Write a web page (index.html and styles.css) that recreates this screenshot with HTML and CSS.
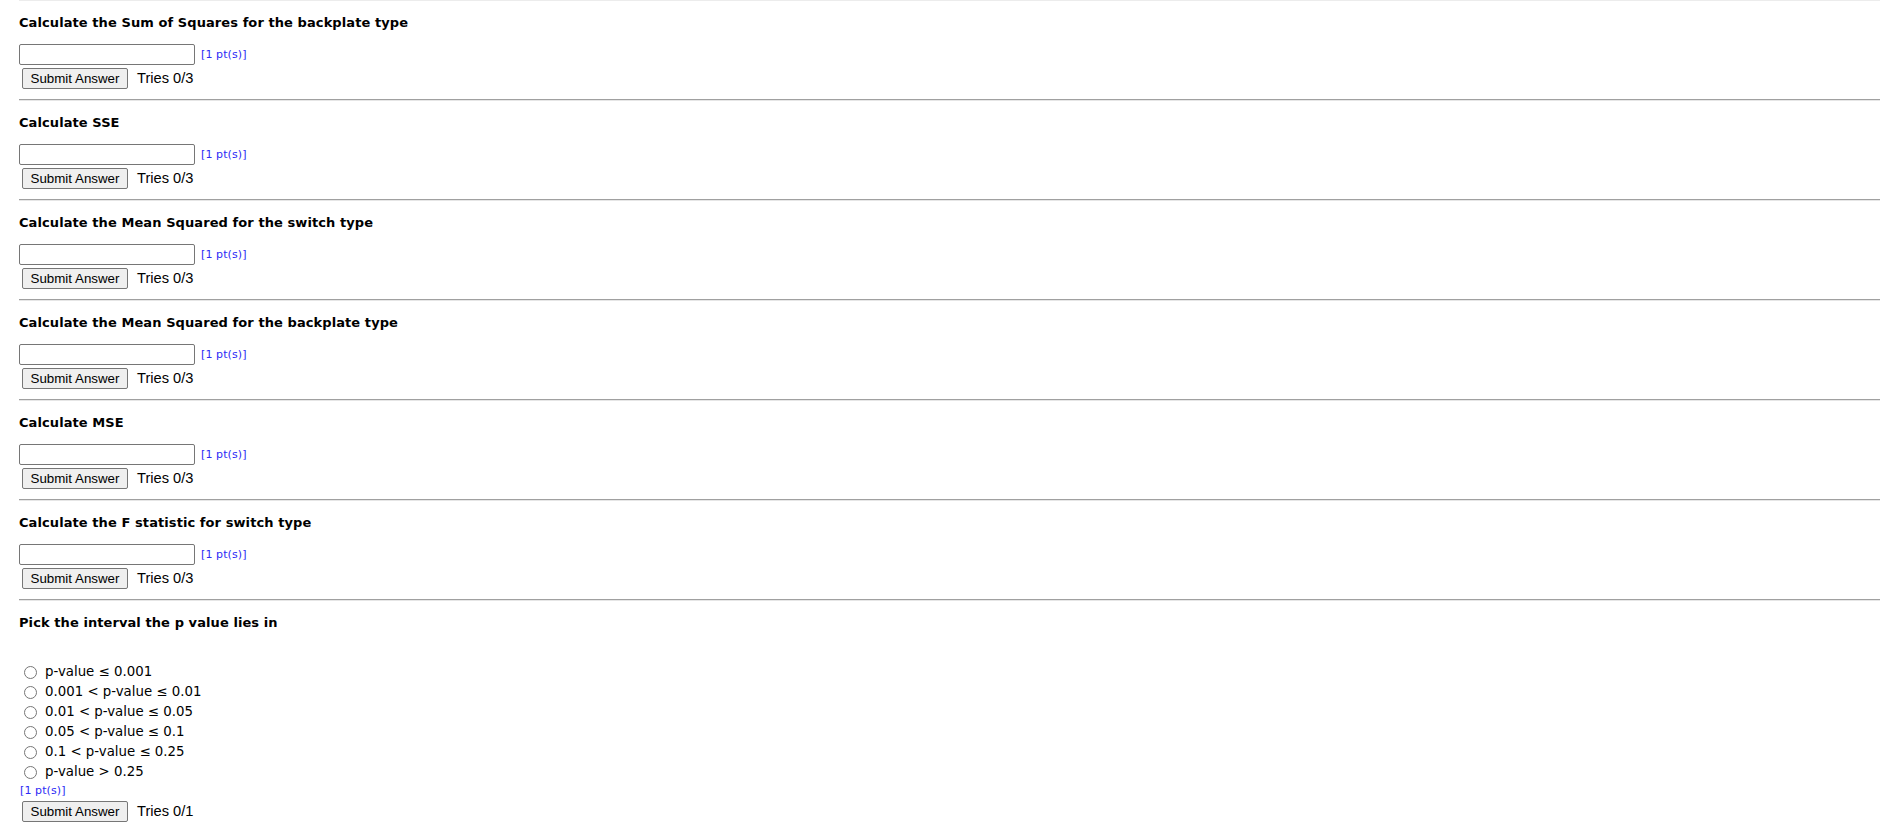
FILE: index.html
```html
<!DOCTYPE html>
<html>
<head>
<meta charset="utf-8">
<title>Problems</title>
<link rel="stylesheet" href="styles.css">
</head>
<body>
<div class="page">
  <div class="top-rule"></div>

  <div class="q">
    <h3 class="qt">Calculate the Sum of Squares for the backplate type</h3>
    <div class="ans"><input class="box" type="text"><span class="pts">[1 pt(s)]</span></div>
    <div class="sub"><button class="btn" type="button">Submit Answer</button><span class="tries">Tries 0/3</span></div>
  </div>
  <hr class="rule">

  <div class="q">
    <h3 class="qt">Calculate SSE</h3>
    <div class="ans"><input class="box" type="text"><span class="pts">[1 pt(s)]</span></div>
    <div class="sub"><button class="btn" type="button">Submit Answer</button><span class="tries">Tries 0/3</span></div>
  </div>
  <hr class="rule">

  <div class="q">
    <h3 class="qt">Calculate the Mean Squared for the switch type</h3>
    <div class="ans"><input class="box" type="text"><span class="pts">[1 pt(s)]</span></div>
    <div class="sub"><button class="btn" type="button">Submit Answer</button><span class="tries">Tries 0/3</span></div>
  </div>
  <hr class="rule">

  <div class="q">
    <h3 class="qt">Calculate the Mean Squared for the backplate type</h3>
    <div class="ans"><input class="box" type="text"><span class="pts">[1 pt(s)]</span></div>
    <div class="sub"><button class="btn" type="button">Submit Answer</button><span class="tries">Tries 0/3</span></div>
  </div>
  <hr class="rule">

  <div class="q">
    <h3 class="qt">Calculate MSE</h3>
    <div class="ans"><input class="box" type="text"><span class="pts">[1 pt(s)]</span></div>
    <div class="sub"><button class="btn" type="button">Submit Answer</button><span class="tries">Tries 0/3</span></div>
  </div>
  <hr class="rule">

  <div class="q">
    <h3 class="qt">Calculate the F statistic for switch type</h3>
    <div class="ans"><input class="box" type="text"><span class="pts">[1 pt(s)]</span></div>
    <div class="sub"><button class="btn" type="button">Submit Answer</button><span class="tries">Tries 0/3</span></div>
  </div>
  <hr class="rule">

  <div class="q">
    <h3 class="qt">Pick the interval the p value lies in</h3>
    <div class="opts">
      <label class="opt"><input class="radio" type="radio" name="pv"><span class="opt-text">p-value ≤ 0.001</span></label>
      <label class="opt"><input class="radio" type="radio" name="pv"><span class="opt-text">0.001 &lt; p-value ≤ 0.01</span></label>
      <label class="opt"><input class="radio" type="radio" name="pv"><span class="opt-text">0.01 &lt; p-value ≤ 0.05</span></label>
      <label class="opt"><input class="radio" type="radio" name="pv"><span class="opt-text">0.05 &lt; p-value ≤ 0.1</span></label>
      <label class="opt"><input class="radio" type="radio" name="pv"><span class="opt-text">0.1 &lt; p-value ≤ 0.25</span></label>
      <label class="opt"><input class="radio" type="radio" name="pv"><span class="opt-text">p-value &gt; 0.25</span></label>
    </div>
    <div class="pts pts-block">[1 pt(s)]</div>
    <div class="sub sub-radio"><button class="btn" type="button">Submit Answer</button><span class="tries">Tries 0/1</span></div>
  </div>
</div>
</body>
</html>
```

FILE: styles.css
```css
html, body {
  margin: 0;
  padding: 0;
  background: #ffffff;
}

.page {
  padding: 0 7px 0 19px;
  font-family: "DejaVu Sans", Verdana, sans-serif;
  color: #000;
}

.top-rule {
  height: 1px;
  background: #ececec;
}

.rule {
  margin: 0;
  border: none;
  height: 2px;
  box-sizing: border-box;
  border-top: 1px solid #a0a0a0;
  border-bottom: 1px solid #e6e6e6;
}

.q {
  padding-bottom: 10px;
}

.qt {
  margin: 13px 0 0 0;
  font-size: 13px;
  line-height: 17px;
  font-weight: bold;
  letter-spacing: 0.08px;
  font-family: "DejaVu Sans", Verdana, sans-serif;
}

.ans {
  margin-top: 13px;
  display: flex;
  align-items: center;
  gap: 6px;
}

.box {
  width: 176px;
  height: 21px;
  box-sizing: border-box;
  margin: 0;
  padding: 1px 2px;
  border: 1px solid #767676;
  border-radius: 2px;
  background: #fff;
  font-family: "Liberation Sans", Arial, sans-serif;
  font-size: 13.33px;
}

.pts {
  font-size: 11px;
  line-height: 15px;
  letter-spacing: 0.1px;
  color: #2b2bf5;
  font-family: "DejaVu Sans", Verdana, sans-serif;
}

.sub {
  margin-top: 3px;
  display: flex;
  align-items: center;
}

.btn {
  margin: 0 0 0 3px;
  height: 21px;
  width: 106px;
  box-sizing: border-box;
  padding: 0 6px;
  border: 1px solid #767676;
  border-radius: 2px;
  background: #efefef;
  color: #000;
  font-family: "Liberation Sans", Arial, sans-serif;
  font-size: 13.33px;
  line-height: 19px;
}

.tries {
  margin-left: 9px;
  font-family: "Liberation Sans", Arial, sans-serif;
  font-size: 14.67px;
  line-height: 17px;
  color: #000;
}

.opts {
  margin-top: 31px;
  display: flex;
  flex-direction: column;
}

.opt {
  height: 20px;
  display: flex;
  align-items: center;
}

.radio {
  margin: 0 0 0 5px;
  width: 13px;
  height: 13px;
}

.opt-text {
  margin-left: 8px;
  font-size: 13.33px;
  line-height: 20px;
}

.pts-block {
  margin-top: 1px;
  margin-left: 1px;
}

.sub-radio {
  margin-top: 3px;
}
```
